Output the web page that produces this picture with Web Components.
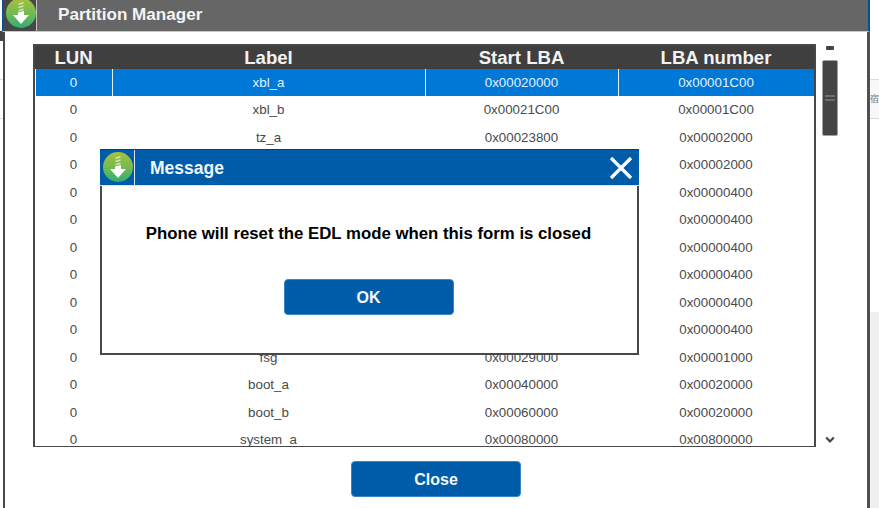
<!DOCTYPE html>
<html>
<head>
<meta charset="utf-8">
<title>Partition Manager</title>
<style>
  html, body { margin: 0; height: 100%; background: #fff; overflow: hidden; }
  body { font-family: "Liberation Sans", Arial, sans-serif; }
</style>
</head>
<body>
<desktop-scraps></desktop-scraps>
<app-window heading="Partition Manager">
  <partition-table>
    <partition-row lun="0" label="xbl_a" start="0x00020000" count="0x00001C00" selected></partition-row>
    <partition-row lun="0" label="xbl_b" start="0x00021C00" count="0x00001C00"></partition-row>
    <partition-row lun="0" label="tz_a" start="0x00023800" count="0x00002000"></partition-row>
    <partition-row lun="0" count="0x00002000"></partition-row>
    <partition-row lun="0" count="0x00000400"></partition-row>
    <partition-row lun="0" count="0x00000400"></partition-row>
    <partition-row lun="0" count="0x00000400"></partition-row>
    <partition-row lun="0" count="0x00000400"></partition-row>
    <partition-row lun="0" count="0x00000400"></partition-row>
    <partition-row lun="0" count="0x00000400"></partition-row>
    <partition-row lun="0" label="fsg" start="0x00029000" count="0x00001000"></partition-row>
    <partition-row lun="0" label="boot_a" start="0x00040000" count="0x00020000"></partition-row>
    <partition-row lun="0" label="boot_b" start="0x00060000" count="0x00020000"></partition-row>
    <partition-row lun="0" label="system_a" start="0x00080000" count="0x00800000"></partition-row>
  </partition-table>
  <app-button slot="footer">Close</app-button>
</app-window>
<message-dialog heading="Message">
  Phone will reset the EDL mode when this form is closed
  <app-button slot="actions">OK</app-button>
</message-dialog>

<script>
class AppIcon extends HTMLElement {
    constructor() {
        super();
        // two icons on the page, so the gradient id has to stay inside the shadow root
        this.attachShadow({ mode: 'open' }).innerHTML = `
            <style>
                :host { display: block; width: 30px; height: 30px; }
                svg { display: block; }
            </style>
            <svg width="30" height="30" viewBox="0 0 30 30">
                <defs>
                    <linearGradient id="ball" x1="0" y1="0" x2="0" y2="1">
                        <stop offset="0" stop-color="#a9c13a"/>
                        <stop offset="0.55" stop-color="#6fb954"/>
                        <stop offset="1" stop-color="#2fae74"/>
                    </linearGradient>
                </defs>
                <circle cx="15" cy="15" r="15" fill="url(#ball)"/>
                <path d="M12.5 5.5l5-1.5v1.6l-5 1.5zM12.5 8.7l5-1.5v1.6l-5 1.5zM12.5 11.9l5-1.5v1.6l-5 1.5z" fill="#fff" opacity=".65"/>
                <path d="M12 14.5l6-1.6V17h5l-8 9-8-9h5z" fill="#fff"/>
            </svg>`;
    }
}

class AppButton extends HTMLElement {
    constructor() {
        super();
        this.attachShadow({ mode: 'open' }).innerHTML = `
            <style>
                :host {
                    display: flex; align-items: center; justify-content: center;
                    box-sizing: border-box; width: 170px; height: 36px; padding-top: 1px;
                    background: #005ca9; border: 1px solid #3a86c4; border-radius: 4px;
                    color: #f4f8fc; font: bold 16px "Liberation Sans", Arial, sans-serif;
                }
            </style>
            <slot></slot>`;
    }
}

class PartitionRow extends HTMLElement {
    constructor() {
        super();
        this.attachShadow({ mode: 'open' }).innerHTML = `
            <style>
                :host {
                    display: grid; grid-template-columns: 77px 313px 193px 196px;
                    height: 27.5px; color: #4a4a4a;
                    font: 13.33px/27px "Liberation Sans", Arial, sans-serif;
                }
                :host([selected]) { background: #0078d7; color: #e4f1fc; }
                div { box-sizing: border-box; padding-right: 2px; text-align: center; white-space: nowrap; }
                :host([selected]) div + div { border-left: 1px solid #e4f1fc; margin-left: -1px; }
            </style>
            <div id="lun"></div><div id="label"></div><div id="start"></div><div id="count"></div>`;
    }
    connectedCallback() {
        for (const key of ['lun', 'label', 'start', 'count'])
            this.shadowRoot.getElementById(key).textContent = this.getAttribute(key) || '';
    }
}

class PartitionTable extends HTMLElement {
    constructor() {
        super();
        this.attachShadow({ mode: 'open' }).innerHTML = `
            <style>
                :host {
                    display: block; box-sizing: border-box; width: 783px; height: 403px;
                    border: 2px solid #484848; border-bottom-width: 1.5px; overflow: hidden; background: #fff;
                }
                .head {
                    display: grid; grid-template-columns: 77px 313px 193px 196px;
                    height: 22.5px; margin-right: -2px; background: #3f3f3f; color: #f2f2f2;
                    font: bold 18.6px/23px "Liberation Sans", Arial, sans-serif; text-align: center;
                }
                .rows { margin-left: 1px; }
            </style>
            <div class="head"><div>LUN</div><div>Label</div><div>Start LBA</div><div>LBA number</div></div>
            <div class="rows"><slot></slot></div>`;
    }
}

class ScrollRail extends HTMLElement {
    constructor() {
        super();
        this.attachShadow({ mode: 'open' }).innerHTML = `
            <style>
                :host { display: flex; flex-direction: column; align-items: center; width: 16px; height: 403px; }
                .dash { width: 8px; height: 4px; margin-top: 2px; background: #444; border-radius: 1px; }
                .thumb {
                    box-sizing: border-box; width: 16px; height: 76px; margin-top: 10px;
                    background: #444; border: 1px solid #a0a0a0; border-radius: 2px;
                    display: flex; flex-direction: column; align-items: center; justify-content: center; gap: 2px;
                }
                .thumb i { display: block; width: 10px; height: 2px; background: #6d6d6d; }
                svg { display: block; margin-top: auto; margin-bottom: 3px; }
            </style>
            <div class="dash"></div>
            <div class="thumb"><i></i><i></i></div>
            <svg width="10" height="8" viewBox="0 0 10 8"><path d="M1.2 1.5L5 5.5l3.8-4" fill="none" stroke="#444" stroke-width="2.2"/></svg>`;
    }
}

class AppWindow extends HTMLElement {
    constructor() {
        super();
        this.attachShadow({ mode: 'open' }).innerHTML = `
            <style>
                :host {
                    position: absolute; left: 3px; top: 0; width: 867px; height: 508px;
                    box-sizing: border-box; display: flex; flex-direction: column;
                    background: #fff; border-left: 2px solid #484848; border-right: 3px solid #505050;
                }
                .bar {
                    display: flex; height: 31px; margin: 0 -3px 0 -3px; flex: none;
                    background: #666; border-left: 1px solid #0a4f8c; border-right: 2px solid #0a4f8c;
                    border-bottom: 1px solid #c8c8c8; box-sizing: content-box;
                    color: #f4f4f4; font: bold 17.1px/30px "Liberation Sans", Arial, sans-serif;
                }
                .logo { width: 33px; background: #474747; border-right: 1px solid #c4c4c4; overflow: hidden; flex: none; }
                app-icon { margin: -2px 0 0 3px; }
                .title { margin-left: 21px; }
                .main { display: flex; gap: 6px; margin: 12px 0 0 28px; }
                .foot { display: flex; justify-content: center; margin-top: 14px; }
            </style>
            <div class="bar"><div class="logo"><app-icon></app-icon></div><div class="title"></div></div>
            <div class="main"><slot></slot><scroll-rail></scroll-rail></div>
            <div class="foot"><slot name="footer"></slot></div>`;
    }
    connectedCallback() {
        this.shadowRoot.querySelector('.title').textContent = this.getAttribute('heading');
    }
}

class MessageDialog extends HTMLElement {
    constructor() {
        super();
        this.attachShadow({ mode: 'open' }).innerHTML = `
            <style>
                :host {
                    position: absolute; left: 100px; top: 149px; width: 539px; height: 206px;
                    box-sizing: border-box; display: flex; flex-direction: column;
                    background: #fff; border: 2px solid #484848; border-top: 0;
                }
                .bar {
                    display: flex; align-items: center; flex: none; height: 35px; margin: 0 -2px;
                    background: #005ca9; border-top: 1px solid #003f78; border-bottom: 1px solid #d8e6f2;
                    color: #f2f7fc; font: bold 17.5px "Liberation Sans", Arial, sans-serif;
                }
                .logo { box-sizing: border-box; width: 35px; height: 100%; padding: 2px 0 0 3px; border-right: 1px solid #d8e6f2; flex: none; }
                .title { margin-left: 15px; padding-top: 2px; flex: 1; }
                svg { display: block; margin-right: 5px; }
                .body { display: flex; flex-direction: column; align-items: center; flex: 1; padding-right: 2px; }
                .text { margin-top: 39px; height: 18px; color: #000; white-space: nowrap; font: bold 16.8px/18px "Liberation Sans", Arial, sans-serif; }
                .actions { margin-top: 36px; }
            </style>
            <div class="bar">
                <div class="logo"><app-icon></app-icon></div>
                <div class="title"></div>
                <svg width="26" height="26" viewBox="0 0 26 26"><path d="M3 3l20 20M23 3L3 23" stroke="#fff" stroke-width="3.2" fill="none"/></svg>
            </div>
            <div class="body">
                <div class="text"><slot></slot></div>
                <div class="actions"><slot name="actions"></slot></div>
            </div>`;
    }
    connectedCallback() {
        this.shadowRoot.querySelector('.title').textContent = this.getAttribute('heading');
    }
}

// bits of the other windows showing on both sides of the main one
class DesktopScraps extends HTMLElement {
    constructor() {
        super();
        this.attachShadow({ mode: 'open' }).innerHTML = `
            <style>
                :host { display: block; }
                div { position: absolute; box-sizing: border-box; }
                .band { left: 0; top: 31px; width: 3px; height: 10px; background: #444; }
                .line { left: 0; width: 3px; height: 1px; background: #ddd; }
                .cell {
                    left: 870px; top: 79px; width: 9px; height: 40px;
                    background: #f8f8f8; border-top: 1px solid #ddd; border-bottom: 1px solid #ddd;
                    color: #777; font: 9px/38px "Noto Sans CJK SC", sans-serif; white-space: nowrap;
                }
                .panel { left: 870px; top: 312px; width: 9px; height: 196px; background: #f0f0f0; }
            </style>
            <div class="band"></div>
            <div class="line" style="top:79px"></div>
            <div class="line" style="top:118px"></div>
            <div class="cell">宿</div>
            <div class="panel"></div>`;
    }
}

customElements.define('app-icon', AppIcon);
customElements.define('app-button', AppButton);
customElements.define('partition-row', PartitionRow);
customElements.define('partition-table', PartitionTable);
customElements.define('scroll-rail', ScrollRail);
customElements.define('app-window', AppWindow);
customElements.define('message-dialog', MessageDialog);
customElements.define('desktop-scraps', DesktopScraps);
</script>
</body>
</html>
